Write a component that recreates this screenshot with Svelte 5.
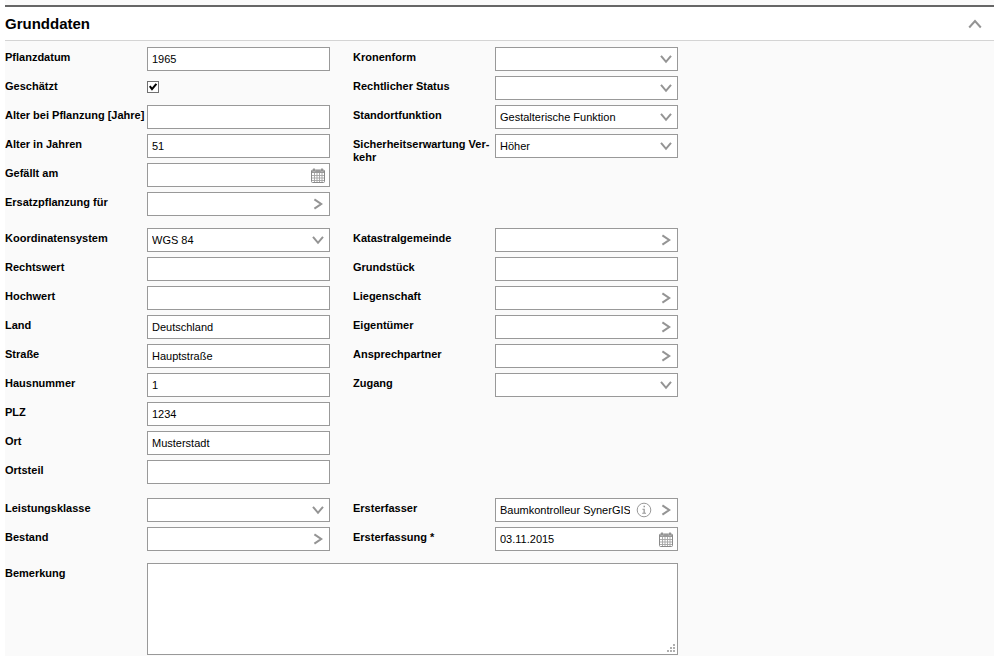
<script>
  let open = $state(true);

  const groups = [
    {
      id: 'tree',
      left: [
        { id: 'pflanzdatum', label: 'Pflanzdatum', type: 'text', value: '1965' },
        { id: 'geschaetzt', label: 'Geschätzt', type: 'check', value: true },
        { id: 'alterpflanzung', label: 'Alter bei Pflanzung [Jahre]', type: 'text', value: '' },
        { id: 'alter', label: 'Alter in Jahren', type: 'text', value: '51' },
        { id: 'gefaellt', label: 'Gefällt am', type: 'date', value: '' },
        { id: 'ersatz', label: 'Ersatzpflanzung für', type: 'lookup', value: '' }
      ],
      right: [
        { id: 'kronenform', label: 'Kronenform', type: 'select', value: '' },
        { id: 'status', label: 'Rechtlicher Status', type: 'select', value: '' },
        { id: 'funktion', label: 'Standortfunktion', type: 'select', value: 'Gestalterische Funktion' },
        { id: 'sicherheit', label: 'Sicherheitserwartung Ver\u00adkehr', type: 'select', value: 'Höher' }
      ]
    },
    {
      id: 'location',
      left: [
        { id: 'koord', label: 'Koordinatensystem', type: 'select', value: 'WGS 84' },
        { id: 'rechtswert', label: 'Rechtswert', type: 'text', value: '' },
        { id: 'hochwert', label: 'Hochwert', type: 'text', value: '' },
        { id: 'land', label: 'Land', type: 'text', value: 'Deutschland' },
        { id: 'strasse', label: 'Straße', type: 'text', value: 'Hauptstraße' },
        { id: 'hausnummer', label: 'Hausnummer', type: 'text', value: '1' },
        { id: 'plz', label: 'PLZ', type: 'text', value: '1234' },
        { id: 'ort', label: 'Ort', type: 'text', value: 'Musterstadt' },
        { id: 'ortsteil', label: 'Ortsteil', type: 'text', value: '' }
      ],
      right: [
        { id: 'katastral', label: 'Katastralgemeinde', type: 'lookup', value: '' },
        { id: 'grundstueck', label: 'Grundstück', type: 'text', value: '' },
        { id: 'liegenschaft', label: 'Liegenschaft', type: 'lookup', value: '' },
        { id: 'eigentuemer', label: 'Eigentümer', type: 'lookup', value: '' },
        { id: 'ansprech', label: 'Ansprechpartner', type: 'lookup', value: '' },
        { id: 'zugang', label: 'Zugang', type: 'select', value: '' }
      ]
    },
    {
      id: 'record',
      left: [
        { id: 'leistung', label: 'Leistungsklasse', type: 'select', value: '' },
        { id: 'bestand', label: 'Bestand', type: 'lookup', value: '' }
      ],
      right: [
        { id: 'erfasser', label: 'Ersterfasser', type: 'lookup', value: 'Baumkontrolleur SynerGIS', info: true },
        { id: 'erfassung', label: 'Ersterfassung *', type: 'date', value: '03.11.2015' }
      ]
    }
  ];
</script>

{#snippet field(f)}
  <div class="row">
    <label for={f.id}>{f.label}</label>
    {#if f.type === 'check'}
      <span class="checkbox">
        <input id={f.id} type="checkbox" checked={f.value} />
        <svg class="tick" viewBox="0 0 12 12" aria-hidden="true">
          <path d="M2.8 5.2 5 8.2 9.4 2.8" fill="none" stroke="#000" stroke-width="2" />
        </svg>
      </span>
    {:else}
      <div class="box">
        {#if f.type === 'select'}
          <select id={f.id}>
            <option>{f.value}</option>
          </select>
          <svg class="chevron" viewBox="0 0 12 12" aria-hidden="true">
            <path d="M1 2.8 6 8.8 11 2.8" />
          </svg>
        {:else}
          <input id={f.id} type="text" value={f.value} />
          {#if f.info}
            <button class="details" type="button" aria-label="Info">
              <svg class="info" viewBox="0 0 16 16" aria-hidden="true">
                <circle cx="8" cy="8" r="6.8" fill="none" stroke="#999" />
                <path d="M7.5 3.8h1.5v1.5H7.5zM6.4 6.8h2.4v4h1.2v1H6.2v-1h1.3v-3H6.4z" fill="#999" />
              </svg>
            </button>
          {/if}
          {#if f.type === 'lookup'}
            <button type="button" aria-label="Auswählen">
              <svg class="arrow" viewBox="0 0 12 12" aria-hidden="true">
                <path d="M2.4 1.4 9.2 6 2.4 10.6" />
              </svg>
            </button>
          {:else if f.type === 'date'}
            <button type="button" aria-label="Kalender">
              <svg class="calendar" viewBox="0 0 14 15" aria-hidden="true">
                <rect x="0.5" y="2" width="13" height="12.5" rx="1" fill="#fff" stroke="#8a8a8a" />
                <path d="M1 2h12v3H1z" fill="#999" />
                <path d="M2 0.5h2v3H2zM10 0.5h2v3h-2z" fill="#808080" stroke="#ddd" stroke-width="0.4" />
                <path d="M3.5 5v9M6 5v9M8.5 5v9M11 5v9M1 7.5h12M1 10h12M1 12.5h12" stroke="#a4a4a4" stroke-width="0.9" />
              </svg>
            </button>
          {/if}
        {/if}
      </div>
    {/if}
  </div>
{/snippet}

<main>
  <header>
    <h2>Grunddaten</h2>
    <button type="button" aria-label="Grunddaten ein- oder ausklappen" aria-expanded={open} onclick={() => (open = !open)}>
      <svg viewBox="0 0 14 10" aria-hidden="true" class:closed={!open}>
        <path d="M1.2 8.5 7 2 12.8 8.5" />
      </svg>
    </button>
  </header>

  {#if open}
    <form>
      {#each groups as g (g.id)}
        <div class="group {g.id}">
          <div class="column">
            {#each g.left as f (f.id)}{@render field(f)}{/each}
          </div>
          <div class="column">
            {#each g.right as f (f.id)}{@render field(f)}{/each}
          </div>
        </div>
      {/each}
      <div class="row">
        <label for="bemerkung">Bemerkung</label>
        <div class="note">
          <textarea id="bemerkung"></textarea>
          <svg viewBox="0 0 8 8" aria-hidden="true">
            <path d="M6 0h2v2H6zM3 3h2v2H3zM6 3h2v2H6zM0 6h2v2H0zM3 6h2v2H3zM6 6h2v2H6z" fill="#b0b0b0" />
          </svg>
        </div>
      </div>
    </form>
  {/if}
</main>

<style>
  :global(body) {
    background: #fff;
  }

  main {
    margin: 0 6px 0 5px;
    padding-top: 5px;
    background: #fafafa;
    color: #000;
    font: 11px/13px 'Liberation Sans', Arial, sans-serif;
  }

  header {
    display: flex;
    align-items: center;
    justify-content: space-between;
    height: 33px;
    padding-right: 12px;
    border-top: 2px solid #666;
    border-bottom: 1px solid #d4d4d4;
    background: #fff;
  }

  h2 {
    margin: 0;
    font-size: 15px;
    line-height: 18px;
  }

  button {
    display: flex;
    flex: none;
    align-items: center;
    justify-content: center;
    padding: 0;
    border: 0;
    background: none;
  }

  header svg {
    width: 14px;
    height: 10px;
  }

  header path,
  .chevron path,
  .arrow path {
    fill: none;
    stroke: #949494;
    stroke-width: 2;
  }

  .closed {
    transform: rotate(180deg);
  }

  form {
    display: flex;
    flex-direction: column;
    gap: 12px;
    max-width: 673px;
    padding: 6px 0 1px;
  }

  .group {
    display: grid;
    grid-template-columns: repeat(2, minmax(0, 1fr));
    gap: 23px;
  }

  .location {
    padding-bottom: 2px;
  }

  .column {
    display: flex;
    flex-direction: column;
    gap: 5px;
  }

  .row {
    display: flex;
    min-height: 24px;
  }

  label {
    flex: none;
    box-sizing: border-box;
    width: 142px;
    padding-top: 4px;
    font-weight: bold;
  }

  .box {
    position: relative;
    display: flex;
    flex: 1;
    box-sizing: border-box;
    min-width: 0;
    height: 24px;
    border: 1px solid #999;
    background: #fff;
  }

  .box input,
  select {
    flex: 1;
    box-sizing: border-box;
    min-width: 0;
    margin: 0;
    padding: 0 0 0 4px;
    border: 0;
    background: none;
    color: inherit;
    font: inherit;
    appearance: none;
  }

  .box button {
    width: 22px;
  }

  .box .details {
    justify-content: flex-end;
    width: 25px;
    padding-right: 3px;
  }

  .chevron {
    position: absolute;
    top: 5px;
    right: 5px;
    width: 12px;
    height: 12px;
    pointer-events: none;
  }

  .arrow {
    width: 12px;
    height: 12px;
  }

  .info {
    width: 16px;
    height: 16px;
  }

  .calendar {
    width: 14px;
    height: 15px;
  }

  .checkbox {
    position: relative;
    width: 12px;
    height: 12px;
    margin-top: 5px;
  }

  .checkbox input {
    display: block;
    box-sizing: border-box;
    width: 12px;
    height: 12px;
    margin: 0;
    border: 1px solid #707070;
    background: #fff;
    appearance: none;
  }

  .tick {
    position: absolute;
    inset: 0;
    visibility: hidden;
    pointer-events: none;
  }

  input:checked + .tick {
    visibility: visible;
  }

  .note {
    position: relative;
    flex: 1;
  }

  textarea {
    display: block;
    box-sizing: border-box;
    width: 100%;
    height: 92px;
    margin: 0;
    padding: 4px;
    border: 1px solid #999;
    background: #fff;
    font: inherit;
    resize: none;
  }

  .note svg {
    position: absolute;
    right: 3px;
    bottom: 3px;
    width: 8px;
    height: 8px;
  }
</style>
